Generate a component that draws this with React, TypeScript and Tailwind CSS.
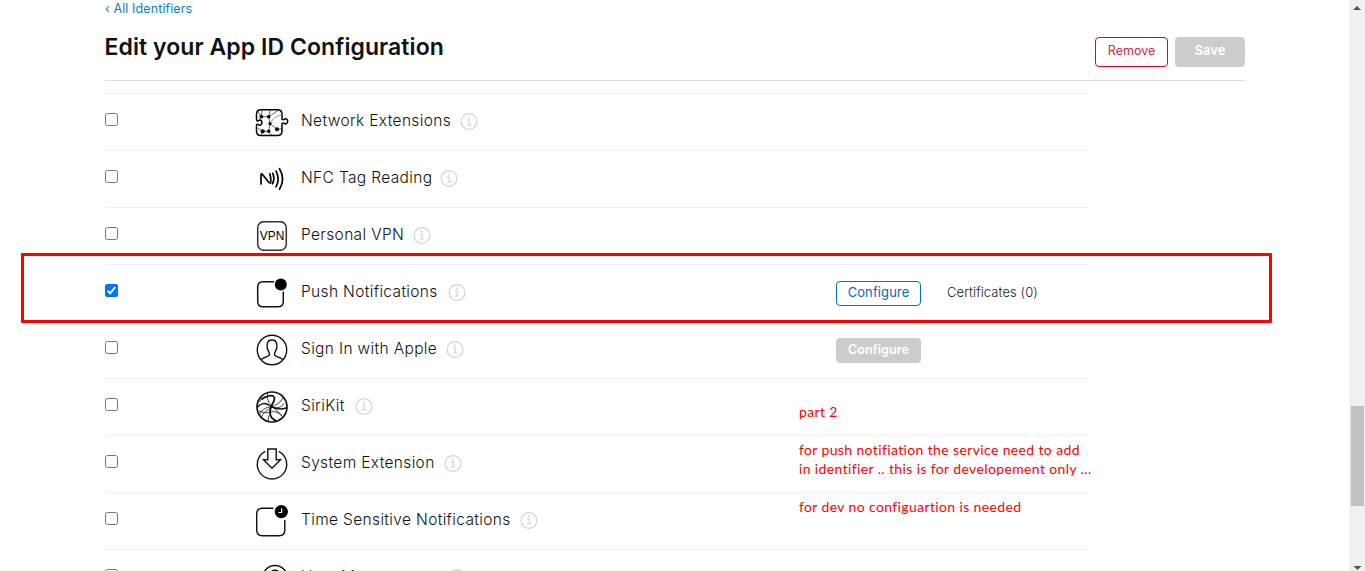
import type { ReactNode } from "react";

function NetworkIcon() {
  return (
    <svg width="34" height="30" viewBox="0 0 34 30" fill="none" stroke="#000" strokeWidth="1.5">
      <path d="M6 .8h16.500q4.500 0 4.500 4.500v4.200c0 1.500 1.200 1.300 2 .8 1.600-1.300 3.700-.3 3.700 2s-2.100 3.300-3.700 2c-.8-.5-2-.6-2 .9V22q0 4.500-4.500 4.500H6Q1.500 26.500 1.500 22v-5.500c0-1.500 1.200-1.300 2-.8 1.600 1.200 3.500.2 3.500-2.100s-1.900-3.300-3.500-2c-.8.6-2 .5-2-1V5.300Q1.500.8 6 .8z" />
      <path d="M3 2.500l3.300 5.200h7.400L15 14.700l-1.300 7.600H7.700L3 19M7.700 22.300l-2 4.200M13.700 22.300l3 4.200M15 14.700l7 5.600 5-.5M7 1.500l-.7 6.200M13.700 7.700l1.500-6.500M13.700 7.700L23 1.500" strokeWidth=".6" />
      <path d="M15 14.700q3-7 12-9" strokeWidth=".8" stroke="#888" />
      <g fill="#000" stroke="none"><circle cx="6.300" cy="7.700" r="1.900" /><circle cx="13.700" cy="7.700" r="1.800" /><circle cx="15" cy="14.700" r="1.600" /><circle cx="7.700" cy="22.300" r="2.100" /><circle cx="13.700" cy="22.300" r="1.700" /><circle cx="22" cy="20.300" r="2" /></g>
    </svg>
  );
}

function NfcIcon() {
  return (
    <svg width="34" height="30" viewBox="0 0 34 30" fill="none" stroke="#000" strokeWidth="1.700" strokeLinecap="round" strokeLinejoin="round">
      <path d="M6 20V11q0-2 1.500-.5l6 7.500q2.300 2.300 2.300-1Q15.800 12 14.800 9.800M21 7.200q4.300 7.800 0 15.600M24.500 4.700q6.200 10.300 0 20.600" />
      <path d="M17.800 9.300q2.400 5.700-.5 10.500" />
    </svg>
  );
}

function VpnIcon() {
  return (
    <svg width="34" height="30" viewBox="0 0 34 30" fill="none">
      <rect x="2.700" y=".7" width="28.600" height="28.600" rx="6" stroke="#333" strokeWidth="1.500" />
      <text x="17" y="19.300" textAnchor="middle" textLength="24.500" lengthAdjust="spacingAndGlyphs" fontSize="13.500" fontFamily="Liberation Sans, sans-serif" fill="#000">VPN</text>
    </svg>
  );
}

function PushIcon() {
  return (
    <svg width="34" height="30" viewBox="0 0 34 30" fill="none">
      <path d="M19 3.700H8Q2.700 3.700 2.700 9v14.500q0 5.300 5.300 5.300h15q5.300 0 5.300-5.300V13.500" stroke="#111" strokeWidth="1.500" />
      <circle cx="25.800" cy="6.500" r="6" fill="#000" />
    </svg>
  );
}

function PersonIcon() {
  return (
    <svg width="34" height="32" viewBox="0 0 34 32" fill="none" stroke="#111" strokeWidth="1.400">
      <circle cx="17" cy="16" r="14.700" />
      <path d="M5.800 25.800q2.700-2.200 7.200-3.700c2-.8 1.900-2.200.8-4.200-2.300-3.700-3.300-11.900 3.200-11.900s5.500 8.200 3.200 11.900c-1.100 2-1.200 3.400.8 4.200q4.500 1.500 7.200 3.700" />
    </svg>
  );
}

function SiriIcon() {
  return (
    <svg width="34" height="32" viewBox="0 0 34 32" fill="none" stroke="#111" strokeLinecap="round">
      <circle cx="17" cy="16" r="15" strokeWidth="1.700" />
      <path d="M7 8c4-3.500 11-4.500 12.300-1.500C20.500 10 15 15 15 21q0 6 5.500 8.500" strokeWidth="1.800" />
      <path d="M2.500 16c3-4 8-4.500 12-1.500 5 3.500 10 4.500 16.500 2.500" strokeWidth="1.500" />
      <path d="M12.500 2q-1 6 1.500 9.500 5 6 13 13M5 23c2-5 8-8 13-6.500 4 1 8 .5 11-4M6 26.500c2-5 7-8 10.500-10S26 11.500 28 7M13.500 30.500q-1-4 .5-6M3.500 11q3-4 8-5M4 20q7 3 12 1t11 4" strokeWidth=".8" />
    </svg>
  );
}

function SystemIcon() {
  return (
    <svg width="34" height="32" viewBox="0 0 34 32" fill="none" stroke="#111" strokeWidth="1.400">
      <path d="M10.200 3.300a14.700 14.700 0 1 0 13.600 0" />
      <path d="M12.800 1h8.400v10.800H25.500L17 20.300l-8.500-8.500h4.300z" />
    </svg>
  );
}

function TimeIcon() {
  return (
    <svg width="34" height="32" viewBox="0 0 34 32" fill="none">
      <path d="M18.500 3.200H7.500Q1.700 3.200 1.700 9v16q0 5.800 5.800 5.800h16.500q5.800 0 5.800-5.800V15" stroke="#111" strokeWidth="1.400" />
      <circle cx="26.300" cy="6.700" r="6.600" fill="#000" />
      <path d="M26.600 3.300v4.200h-3.200" stroke="#fff" strokeWidth="1.200" />
    </svg>
  );
}

function UsersIcon() {
  return (
    <svg width="34" height="30" viewBox="0 0 34 30" fill="none" stroke="#111" strokeWidth="1.500">
      <circle cx="20" cy="14" r="12.500" />
      <path d="M14 24c5-2 2-5 1-8-1-6 1-9.700 5-9.700s6 3.700 5 9.700c-1 3-4 6 1 8" />
    </svg>
  );
}

function InfoIcon() {
  return (
    <svg width="18" height="18" viewBox="0 0 18 18" fill="none" stroke="#d2d2d2" className="shrink-0">
      <circle cx="9" cy="9.500" r="7.900" strokeWidth="1.200" />
      <path d="M7 8h2.300v5M6.500 13h5" strokeWidth="1.100" />
      <circle cx="9" cy="5.500" r=".9" fill="#d2d2d2" stroke="none" />
    </svg>
  );
}

function Checkbox({ checked }: { checked?: boolean }) {
  return checked ? (
    <span className="flex h-[13px] w-[13px] items-center justify-center rounded-[2px] bg-[#0075ff]">
      <svg width="13" height="13" viewBox="0 0 13 13" fill="none" stroke="#fff" strokeWidth="2"><path d="M2.600 6.800l2.600 2.500 5-6.300" /></svg>
    </span>
  ) : (
    <span className="block h-[13px] w-[13px] rounded-[2.5px] border border-[#767676] bg-white" />
  );
}

type RowData = { label: string; width: string; icon: ReactNode; iconPad: string; labelPad?: string; checked?: boolean; action?: ReactNode };

const rows: RowData[] = [
  { label: "Network Extensions", width: "w-[159px]", icon: <NetworkIcon />, iconPad: "pt-[15px]" },
  { label: "NFC Tag Reading", width: "w-[139px]", icon: <NfcIcon />, iconPad: "pt-[13px]" },
  { label: "Personal VPN", width: "w-[112px]", icon: <VpnIcon />, iconPad: "pt-[13px]" },
  {
    label: "Push Notifications", width: "w-[147px]", icon: <PushIcon />, iconPad: "pt-[13px]", checked: true,
    action: (
      <>
        <button className="mt-4 h-[25px] w-[85px] rounded-[4px] border border-[#0070c9] pb-px text-[13px] tracking-[0.1px] text-[#0b66c3]">Configure</button>
        <span className="ml-[26px] mt-[17px] text-[13px] font-light leading-5 tracking-[0.08px] text-[#222]">Certificates (0)</span>
      </>
    ),
  },
  {
    label: "Sign In with Apple", width: "w-[145px]", icon: <PersonIcon />, iconPad: "pt-[12px]",
    action: <button className="mt-4 h-[25px] w-[85px] rounded-[4px] bg-[#ccc] pb-px text-[12.5px] font-semibold tracking-[0.1px] text-white">Configure</button>,
  },
  { label: "SiriKit", width: "w-[54px]", icon: <SiriIcon />, iconPad: "pt-[12px]" },
  { label: "System Extension", width: "w-[143px]", icon: <SystemIcon />, iconPad: "pt-[12px]" },
  { label: "Time Sensitive Notifications", width: "w-[219px]", icon: <TimeIcon />, iconPad: "pt-[12px]" },
  { label: "User Management", width: "w-[147px]", icon: <UsersIcon />, iconPad: "pt-[14px]" },
];

function Row({ label, width, icon, iconPad, checked, action }: RowData) {
  return (
    <div className="flex h-[57px] items-start border-t border-[#f0f0f0]">
      <div className="w-[150px] pt-[19px]"><Checkbox checked={checked} /></div>
      <div className={`w-[46px] shrink-0 ${iconPad}`}>{icon}</div>
      <div className="flex w-[535px] pt-[15px]">
        <span className={`shrink-0 whitespace-nowrap text-[15.5px] font-light leading-6 tracking-[0.35px] text-[#111] ${width}`}>{label}</span>
        <span className="pt-[3px]"><InfoIcon /></span>
      </div>
      {action}
    </div>
  );
}

export default function App() {
  return (
    <div className="relative flex h-[571px] w-[1365px] overflow-hidden bg-white font-['Inter',sans-serif]">
      <main className="w-[1349px] pl-[105px]">
        <header className="flex h-[81px] w-[1140px] justify-between border-b border-[#ddd]">
          <div>
            <a className="block h-[17px] whitespace-nowrap text-[12.5px] leading-[17px] tracking-[0.1px] text-[#0f7bcb]">‹ All Identifiers</a>
            <h1 className="-ml-[0.5px] mt-[14px] whitespace-nowrap text-[23px] font-semibold leading-8 tracking-[0.07px] text-[#111]">Edit your App ID Configuration</h1>
          </div>
          <div className="flex gap-[7px] pt-[37px]">
            <button className="h-[30px] w-[73px] rounded-[4px] border border-[#e30021] pb-0.5 text-[12.5px] text-[#e1233d]">Remove</button>
            <button className="h-[30px] w-[70px] rounded-[4px] bg-[#ccc] pb-0.5 text-[13px] font-semibold text-white">Save</button>
          </div>
        </header>
        <section className="mt-3 w-[983px]">
          {rows.map((row) => <Row key={row.label} {...row} />)}
        </section>
      </main>
      <aside className="flex w-4 flex-col items-center bg-[#f0f0f0]">
        <svg width="16" height="16" viewBox="0 0 16 16"><path d="M4 10h8L8 6z" fill="#505050" /></svg>
        <div className="mt-[390px] h-[100px] w-[13px] bg-[#c1c1c1]" />
        <svg className="mt-auto" width="16" height="8" viewBox="0 0 16 8"><path d="M4.500 3h8l-4 4z" fill="#505050" /></svg>
      </aside>
      <div className="absolute left-[21px] top-[253px] h-[70px] w-[1251px] rounded-[1px] border-[3px] border-[#f00]" />
      <div className="absolute left-[799px] top-[402px] whitespace-nowrap font-['Lato',sans-serif] text-[14px] leading-[19px] tracking-[0.37px] text-[#f00]">
        <p>part 2</p>
        <p className="mt-[19px]">for push notifiation the service need to add</p>
        <p>in identifier .. this is for developement only ...</p>
        <p className="mt-[19px]">for dev no configuartion is needed</p>
      </div>
    </div>
  );
}
